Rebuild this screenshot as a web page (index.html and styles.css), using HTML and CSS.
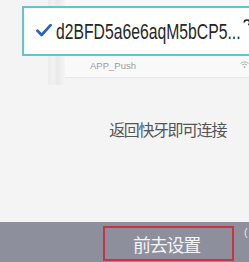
FILE: index.html
```html
<!DOCTYPE html>
<html lang="zh-CN">
<head>
<meta charset="utf-8">
<title>前去设置</title>
<link rel="stylesheet" href="styles.css">
</head>
<body>
<div class="page">
  <div class="upper">
    <div class="phone">
      <div class="gutter"></div>
      <div class="strip"></div>
      <div class="card">
        <span class="ssid">APP_Push</span>
        <svg class="wifi" width="9" height="7" viewBox="0 0 9 7">
          <path d="M0.5 2.5 Q4.5 -0.8 8.5 2.5" fill="none" stroke="#b0b0b0" stroke-width="1"/>
          <path d="M2 4 Q4.5 2 7 4" fill="none" stroke="#b0b0b0" stroke-width="1"/>
          <circle cx="4.5" cy="6" r="0.9" fill="#b0b0b0"/>
        </svg>
      </div>
    </div>
    <div class="toast">
      <svg class="check" width="16" height="13" viewBox="0 0 16 13">
        <path d="M1.5 6.8 L5.6 11 L14.6 1.2" fill="none" stroke="#2566bd" stroke-width="2.7" stroke-linecap="round" stroke-linejoin="round"/>
      </svg>
      <span class="name">d2BFD5a6e6aqM5bCP5...</span>
      <svg class="cut" width="8" height="9" viewBox="0 0 8 9">
        <path d="M1.2 3.6 Q1.2 1 4 1 Q6.8 1 6.8 3.4 Q6.8 4.8 5.4 6" fill="none" stroke="#222" stroke-width="1.7"/>
      </svg>
    </div>
    <p class="hint">返回快牙即可连接</p>
  </div>
  <div class="bar">
    <div class="btn">前去设置</div>
    <span class="edge">(</span>
  </div>
</div>
</body>
</html>
```
FILE: styles.css
```css
html, body {
  margin: 0;
  padding: 0;
}
body {
  background: #f4f4f4;
  font-family: "Liberation Sans", "Noto Sans CJK SC", sans-serif;
}
.page {
  width: 249px;
  height: 262px;
  display: flex;
  flex-direction: column;
  overflow: hidden;
  background: #f4f4f4;
}
.upper {
  flex: 0 0 222px;
  position: relative;
}
.phone {
  display: flex;
  align-items: flex-start;
  height: 85px;
}
.gutter {
  width: 48px;
  flex: none;
}
.strip {
  width: 17px;
  height: 85px;
  flex: none;
  background: linear-gradient(90deg, #ececec 0, #f1f1f1 30%, #e9e9e9 55%, #efefef 80%, #f5f5f5 100%);
}
.card {
  flex: 1;
  height: 78px;
  box-sizing: border-box;
  background: #f9f9f9;
  border-bottom: 1px solid #e7e7e7;
  display: flex;
  align-items: flex-end;
  justify-content: space-between;
  padding: 0 0 6px 25px;
}
.ssid {
  font-family: "Liberation Sans", sans-serif;
  font-size: 9.5px;
  line-height: 11px;
  color: #9c9c9c;
}
.wifi {
  display: block;
  margin-bottom: 3px;
}
.toast {
  position: absolute;
  left: 22px;
  top: 6px;
  width: 250px;
  height: 50px;
  box-sizing: border-box;
  border: 2px solid #5ec6cd;
  background: #ffffff;
  display: flex;
  align-items: center;
  padding-left: 12px;
}
.check {
  display: block;
  flex: none;
  margin-top: -2px;
}
.name {
  display: block;
  flex: none;
  width: 186px;
  margin-left: 4px;
  font-family: "Liberation Sans", sans-serif;
  font-size: 22px;
  line-height: 26px;
  color: #262626;
  white-space: nowrap;
  transform: scaleX(0.715);
  transform-origin: left center;
  margin-top: 1px;
}
.cut {
  display: block;
  flex: none;
  margin-left: 1px;
  margin-top: -16px;
}
.hint {
  margin: 34px 0 0 0;
  padding-right: 23px;
  text-align: right;
  font-family: "Noto Sans CJK SC", sans-serif;
  font-size: 16px;
  line-height: 20px;
  letter-spacing: -1.4px;
  color: #555555;
}
.bar {
  flex: 1;
  background: #8e8f9d;
  display: flex;
  align-items: flex-start;
  padding: 4px 0 0 103px;
}
.btn {
  width: 131px;
  height: 35px;
  box-sizing: border-box;
  border: 2px solid #c8353f;
  display: flex;
  align-items: center;
  justify-content: center;
  padding-right: 4px;
  font-family: "Noto Sans CJK SC", sans-serif;
  font-size: 18px;
  letter-spacing: -1.2px;
  color: #f4f4f6;
}
.edge {
  margin-left: 10px;
  font-size: 11px;
  line-height: 12px;
  color: #e6e6ea;
}
```
